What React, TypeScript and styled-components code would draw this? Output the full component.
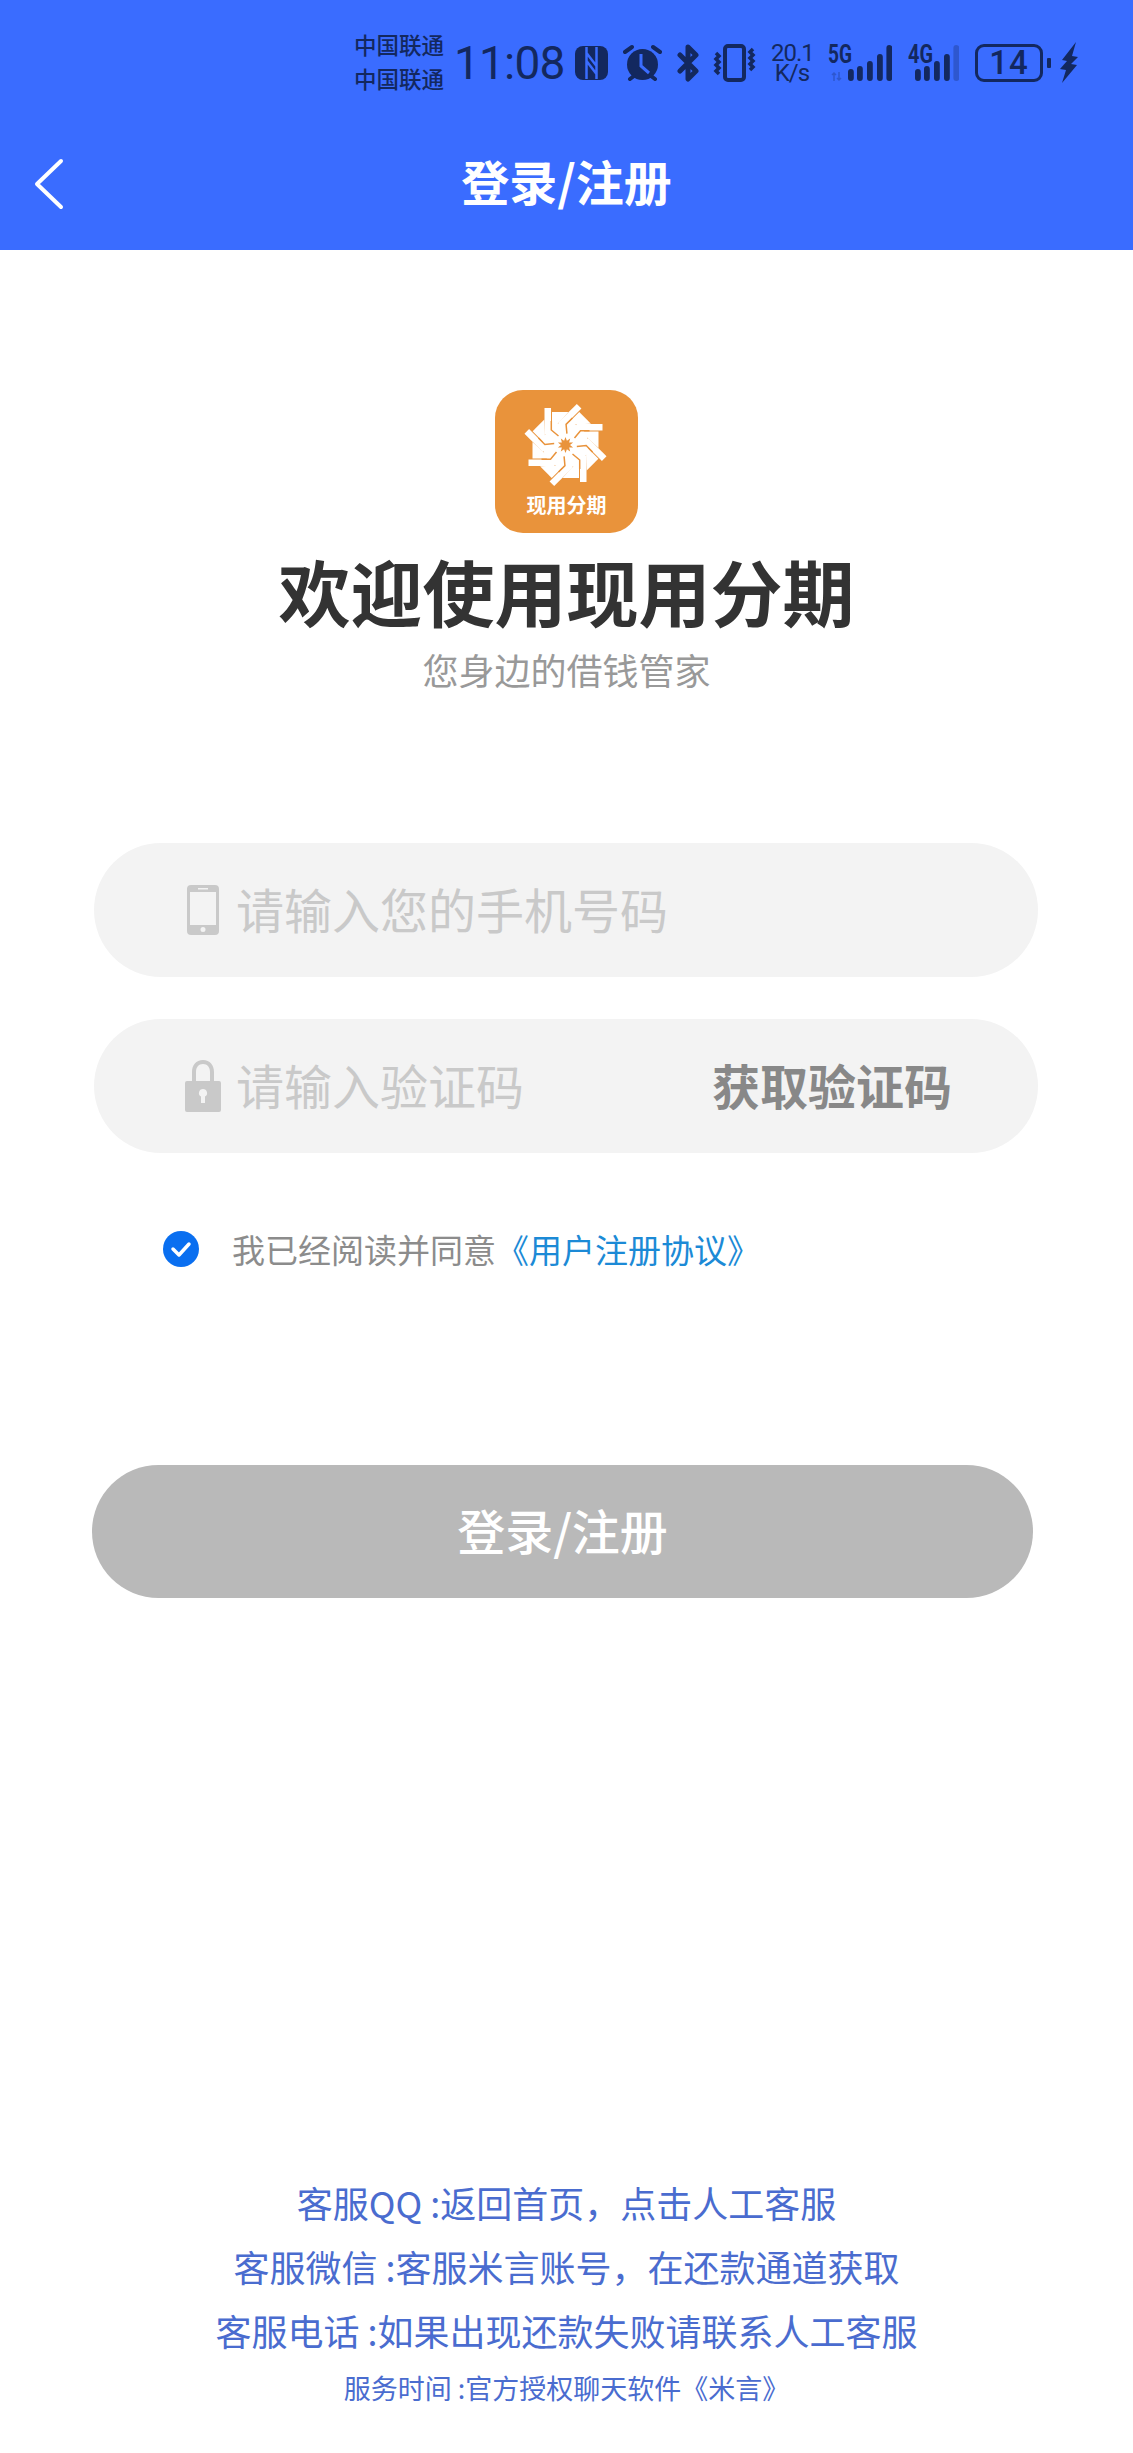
import styled, { createGlobalStyle } from "styled-components";

const GlobalStyle = createGlobalStyle`
  html, body {
    margin: 0;
    padding: 0;
    background: #fff;
  }
  * {
    box-sizing: border-box;
  }
  body {
    font-family: "Noto Sans CJK SC", sans-serif;
  }
`;

const Page = styled.div`
  width: 1133px;
  height: 2453px;
  display: flex;
  flex-direction: column;
  overflow: hidden;
  background: #fff;
`;
const Header = styled.header`
  height: 250px;
  background: #3a6cff;
  display: flex;
  flex-direction: column;
`;
const StatusBar = styled.div`
  height: 125px;
  padding-left: 354px;
  display: flex;
  align-items: center;
  color: #13285f;
`;
const Carrier = styled.div`
  width: 90px;
  padding-bottom: 3px;
  display: flex;
  flex-direction: column;
  font-size: 22.5px;
  font-weight: 500;
  line-height: 34px;
  white-space: nowrap;
`;
const Clock = styled.span`
  margin-left: 10px;
  width: 110px;
  font-family: "Roboto", sans-serif;
  font-size: 46px;
  letter-spacing: -0.8px;
  line-height: 50px;
`;
const StatusIcon = styled.svg<{ $left: number }>`
  display: block;
  flex: none;
  margin-left: ${(p) => p.$left}px;
`;
const Speed = styled.div`
  margin-left: 15px;
  width: 42px;
  font-family: "Roboto", sans-serif;
  font-size: 24px;
  letter-spacing: -1px;
  line-height: 20px;
  text-align: center;
  white-space: pre;
`;
const Battery = styled.div`
  margin-left: 16px;
  width: 68px;
  height: 38px;
  border: 3px solid #13285f;
  border-radius: 9px;
  display: flex;
  align-items: center;
  justify-content: center;
  font-family: "Roboto", sans-serif;
  font-size: 33px;
  font-weight: 500;
  letter-spacing: 1px;
`;
const NavBar = styled.nav`
  height: 125px;
  padding-bottom: 16px;
  display: grid;
  grid-template-columns: 1fr auto 1fr;
  align-items: center;
`;
const BackIcon = styled.svg`
  display: block;
  margin: 8px 0 0 32px;
`;
const NavTitle = styled.h1`
  margin: 0;
  font-size: 48px;
  font-weight: 700;
  line-height: 60px;
  color: #fff;
`;
const Brand = styled.section`
  padding-top: 140px;
  display: flex;
  flex-direction: column;
  align-items: center;
`;
const Logo = styled.div`
  position: relative;
  width: 143px;
  height: 143px;
  border-radius: 28px;
  background: #e9933b;
`;
const LogoMark = styled.svg`
  display: block;
`;
const LogoText = styled.span`
  position: absolute;
  left: 0;
  right: 0;
  bottom: 14px;
  text-align: center;
  font-size: 20px;
  font-weight: 700;
  line-height: 28px;
  color: #fff;
`;
const Welcome = styled.h2`
  margin: 15px 0 0;
  font-size: 72px;
  font-weight: 700;
  line-height: 84px;
  color: #333;
`;
const Slogan = styled.p`
  margin: 15px 0 0;
  font-size: 36px;
  line-height: 44px;
  color: #999;
`;
const Form = styled.form`
  margin-top: 152px;
  padding-left: 94px;
  display: flex;
  flex-direction: column;
`;
const Field = styled.label`
  width: 944px;
  height: 134px;
  margin-bottom: 42px;
  padding: 0 86px 0 91px;
  border-radius: 67px;
  background: #f3f3f3;
  display: flex;
  align-items: center;
`;
const FieldIcon = styled.svg`
  display: block;
  flex: none;
`;
const Input = styled.input`
  flex: 1;
  min-width: 0;
  margin-left: 15px;
  padding: 0 0 4px;
  border: 0;
  outline: 0;
  background: transparent;
  font-family: "Noto Sans CJK SC", sans-serif;
  font-size: 48px;
  color: #333;
  &::placeholder {
    color: #c9c9c9;
    opacity: 1;
  }
`;
const SendCode = styled.span`
  flex: none;
  padding-bottom: 4px;
  font-size: 48px;
  font-weight: 700;
  color: #888;
`;
const Agreement = styled.div`
  margin-top: 34px;
  padding-left: 69px;
  height: 40px;
  display: flex;
  align-items: center;
  font-size: 33px;
  color: #8c8c8c;
  white-space: nowrap;
`;
const Check = styled.svg`
  display: block;
  flex: none;
  margin-right: 33px;
`;
const AgreementLink = styled.a`
  color: #1c8ad6;
`;
const SubmitButton = styled.button`
  width: 941px;
  height: 133px;
  margin: 196px 0 0 -2px;
  padding: 0 0 6px;
  border: 0;
  border-radius: 67px;
  background: #b9b9b9;
  font-family: "Noto Sans CJK SC", sans-serif;
  font-size: 48px;
  font-weight: 500;
  color: #fff;
`;
const Footer = styled.footer`
  margin-top: auto;
  padding-bottom: 39px;
  display: flex;
  flex-direction: column;
  align-items: center;
  color: #4a6ccf;
`;
const ServiceLine = styled.p`
  margin: 0;
  font-size: 36px;
  line-height: 64px;
`;
const ServiceHours = styled.p`
  margin: 0;
  font-size: 27px;
  line-height: 52px;
`;
const NetworkLabel = styled.text`
  font-family: "Roboto", sans-serif;
  font-size: 25px;
  font-weight: 700;
  fill: #13285f;
`;

const NAVY = "#13285f";
const BLUE = "#3a6cff";
const ORANGE = "#e9933b";
const BLADES = [0, 45, 90, 135, 180, 225, 270, 315];
const STAR = Array.from({ length: 20 }, (_, i) => {
  const r = i % 2 === 0 ? 8 : 4.5;
  const a = (i * 18 * Math.PI) / 180;
  return `${(r * Math.sin(a)).toFixed(1)},${(-r * Math.cos(a)).toFixed(1)}`;
}).join(" ");
const BARS = [
  { x: 0, h: 12 },
  { x: 9, h: 15 },
  { x: 19, h: 20 },
  { x: 29, h: 27 },
  { x: 38.4, h: 36 },
];

function SignalBars({ dimLast }: { dimLast?: boolean }) {
  return (
    <>
      {BARS.map((b, i) => (
        <rect
          key={b.x}
          x={b.x}
          y={36 - b.h}
          width="5.8"
          height={b.h}
          rx="2.9"
          fill={NAVY}
          opacity={dimLast && i === 4 ? 0.3 : 1}
        />
      ))}
    </>
  );
}

export default function App() {
  return (
    <Page>
      <GlobalStyle />
      <Header>
        <StatusBar>
          <Carrier>
            <span>中国联通</span>
            <span>中国联通</span>
          </Carrier>
          <Clock>11:08</Clock>
          <StatusIcon $left={11} width="33" height="34" viewBox="0 0 33 34">
            <rect width="33" height="34" rx="8" fill={NAVY} />
            <path
              d="M11.500 1v32M21.500 1v32M11.500 7l10 13M11.500 15l10 13"
              fill="none"
              stroke={BLUE}
              strokeWidth="2.500"
            />
          </StatusIcon>
          <StatusIcon $left={15} width="39" height="38" viewBox="0 0 39 38">
            <circle cx="19.500" cy="20.500" r="15.500" fill={NAVY} />
            <path d="M18 10v12l8 7" fill="none" stroke={BLUE} strokeWidth="3" />
            <path d="M2 8l7-5M37 8l-7-5M7 35l4-3M32 35l-4-3" stroke={NAVY} strokeWidth="4" strokeLinecap="round" />
          </StatusIcon>
          <StatusIcon $left={15} width="22" height="38" viewBox="0 0 22 38">
            <path
              d="M3 11l16 16-8 8V3l8 8L3 27"
              fill="none"
              stroke={NAVY}
              strokeWidth="5"
              strokeLinejoin="round"
              strokeLinecap="round"
            />
          </StatusIcon>
          <StatusIcon $left={14} width="43" height="38" viewBox="0 0 43 38">
            <rect x="12" y="2" width="19" height="34" rx="3" fill="none" stroke={NAVY} strokeWidth="4" />
            <path
              d="M3 9l3 3-3 3 3 3-3 3 3 3-3 3 3 3M40 5l-3 3 3 3-3 3 3 3-3 3 3 3-3 3"
              fill="none"
              stroke={NAVY}
              strokeWidth="3.500"
            />
          </StatusIcon>
          <Speed>{"20.1\nK/s"}</Speed>
          <StatusIcon $left={15} width="64" height="48" viewBox="0 0 64 48">
            <NetworkLabel x="0" y="23.500" textLength="24" lengthAdjust="spacingAndGlyphs">
              5G
            </NetworkLabel>
            <path d="M6 34v8M4 36l2-2 2 2M11 33v8M9 39l2 2 2-2" stroke={NAVY} strokeWidth="1.500" fill="none" opacity="0.3" />
            <g transform="translate(20 6)">
              <SignalBars />
            </g>
          </StatusIcon>
          <StatusIcon $left={16} width="51" height="48" viewBox="0 0 51 48">
            <NetworkLabel x="0" y="23.500" textLength="25" lengthAdjust="spacingAndGlyphs">
              4G
            </NetworkLabel>
            <g transform="translate(7 6)">
              <SignalBars dimLast />
            </g>
          </StatusIcon>
          <Battery>14</Battery>
          <StatusIcon $left={4} width="4" height="10" viewBox="0 0 4 10">
            <rect width="4" height="10" rx="1" fill={NAVY} />
          </StatusIcon>
          <StatusIcon $left={9} width="18" height="41" viewBox="0 0 18 41">
            <path fill={NAVY} d="M16 0L2 18l5 1-7 8 6 1-4 13 15-18-6-1 7-7-6-1z" />
          </StatusIcon>
        </StatusBar>
        <NavBar>
          <BackIcon width="32" height="52" viewBox="0 0 32 52">
            <path
              d="M29 3L5 26l24 23"
              fill="none"
              stroke="#fff"
              strokeWidth="4"
              strokeLinecap="round"
              strokeLinejoin="round"
            />
          </BackIcon>
          <NavTitle>登录/注册</NavTitle>
        </NavBar>
      </Header>

      <Brand>
        <Logo>
          <LogoMark width="143" height="143" viewBox="0 0 143 143">
            <g transform="translate(70.5 55)" fill="#fff">
              <circle r="23" />
              {BLADES.map((deg) => (
                <g key={deg} transform={`rotate(${deg})`}>
                  <rect x="-21" y="-37" width="6.500" height="26" />
                  <path d="M-13.500 -33L-13.500 -15L3 -33Z" />
                  <path d="M-14.200 -24V-15L-7 -9" fill="none" stroke={ORANGE} strokeWidth="1.500" />
                </g>
              ))}
              <polygon points={STAR} fill={ORANGE} />
            </g>
          </LogoMark>
          <LogoText>现用分期</LogoText>
        </Logo>
        <Welcome>欢迎使用现用分期</Welcome>
        <Slogan>您身边的借钱管家</Slogan>
      </Brand>

      <Form>
        <Field>
          <FieldIcon width="36" height="50" viewBox="0 0 36 50">
            <path
              fill="#c9c9c9"
              fillRule="evenodd"
              d="M6 0h24a4 4 0 0 1 4 4v42a4 4 0 0 1-4 4H6a4 4 0 0 1-4-4V4a4 4 0 0 1 4-4zM5 7v33h26V7zM13 3v1.500h10V3zM18 42a2.500 2.500 0 1 0 0 5 2.500 2.500 0 0 0 0-5z"
            />
          </FieldIcon>
          <Input placeholder="请输入您的手机号码" />
        </Field>
        <Field>
          <FieldIcon width="36" height="52" viewBox="0 0 36 52">
            <path
              fill="#c9c9c9"
              fillRule="evenodd"
              d="M18 0c7 0 11 5 11 12v9h5a2 2 0 0 1 2 2v27a2 2 0 0 1-2 2H2a2 2 0 0 1-2-2V23a2 2 0 0 1 2-2h5v-9C7 5 11 0 18 0zm0 4c-4.500 0-7 3.500-7 8v9h14v-9c0-4.500-2.500-8-7-8zm0 25a4 4 0 0 0-2 7.500V43h4v-6.500A4 4 0 0 0 18 29z"
            />
          </FieldIcon>
          <Input placeholder="请输入验证码" />
          <SendCode>获取验证码</SendCode>
        </Field>
        <Agreement>
          <Check width="36" height="36" viewBox="0 0 36 36">
            <circle cx="18" cy="18" r="18" fill="#0a6ff0" />
            <path
              d="M10 18l6 6 10-11"
              fill="none"
              stroke="#fff"
              strokeWidth="3.500"
              strokeLinecap="round"
              strokeLinejoin="round"
            />
          </Check>
          我已经阅读并同意
          <AgreementLink>《用户注册协议》</AgreementLink>
        </Agreement>
        <SubmitButton type="button">登录/注册</SubmitButton>
      </Form>

      <Footer>
        <ServiceLine>客服QQ :返回首页，点击人工客服</ServiceLine>
        <ServiceLine>客服微信 :客服米言账号，在还款通道获取</ServiceLine>
        <ServiceLine>客服电话 :如果出现还款失败请联系人工客服</ServiceLine>
        <ServiceHours>服务时间 :官方授权聊天软件《米言》</ServiceHours>
      </Footer>
    </Page>
  );
}
